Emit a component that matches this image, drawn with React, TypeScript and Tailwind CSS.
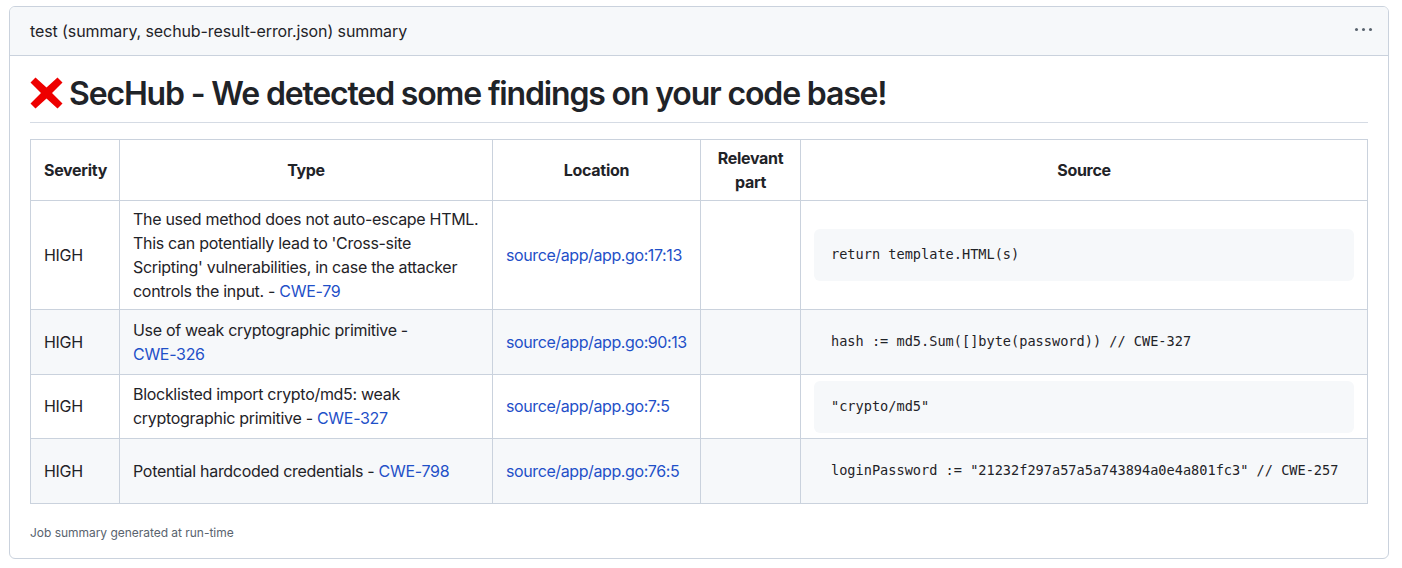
import React from 'react';

interface Row {
  text: string;
  cwe: string;
  location: string;
  source: string;
  boxed: boolean;
  height: string;
  cellPad: string;
}

const rows: Row[] = [
  {
    text: "The used method does not auto-escape HTML. This can potentially lead to 'Cross-site Scripting' vulnerabilities, in case the attacker controls the input. - ",
    cwe: 'CWE-79',
    location: 'source/app/app.go:17:13',
    source: 'return template.HTML(s)',
    boxed: true,
    height: 'h-[109px]',
    cellPad: '',
  },
  {
    text: 'Use of weak cryptographic primitive - ',
    cwe: 'CWE-326',
    location: 'source/app/app.go:90:13',
    source: 'hash := md5.Sum([]byte(password)) // CWE-327',
    boxed: false,
    height: 'h-[65px]',
    cellPad: '',
  },
  {
    text: 'Blocklisted import crypto/md5: weak cryptographic primitive - ',
    cwe: 'CWE-327',
    location: 'source/app/app.go:7:5',
    source: '"crypto/md5"',
    boxed: true,
    height: 'h-[64px]',
    cellPad: 'pb-[1px]',
  },
  {
    text: 'Potential hardcoded credentials - ',
    cwe: 'CWE-798',
    location: 'source/app/app.go:76:5',
    source: 'loginPassword := "21232f297a57a5a743894a0e4a801fc3" // CWE-257',
    boxed: false,
    height: 'h-[65px]',
    cellPad: '',
  },
];

const cell = 'border border-[#cad2dd] px-[13px] align-middle';
const mono = "font-['DejaVu_Sans_Mono',monospace] text-[13.6px] leading-[20px] tracking-normal whitespace-pre text-[#1f2328] -translate-y-[1px]";

const CrossMark = () => (
  <svg width="33" height="32" viewBox="0 0 33 32" className="shrink-0">
    <path d="M0.5 5.5 L5.5 0.5 L16.5 10.5 L27.5 0.5 L32.5 5.5 L22 16 L32.5 26.5 L27.5 31.5 L16.5 21.5 L5.5 31.5 L0.5 26.5 L11 16 Z" fill="#ee0000" />
  </svg>
);

const App: React.FC = () => {
  return (
    <div className="w-[1402px] h-[568px] bg-white pt-[6px] pl-[9px] font-['Inter',sans-serif] text-[#1f2328]">
      <div className="w-[1380px] h-[553px] border border-[#cad2dd] rounded-[6px] overflow-hidden flex flex-col">
        <div className="h-[49px] shrink-0 bg-[#f6f8fa] border-b border-[#cad2dd] flex items-center justify-between pl-[20px] pr-[16px]">
          <span className="text-[16px] tracking-[-0.1px]">test (summary, sechub-result-error.json) summary</span>
          <div className="flex gap-[4px] pb-[3px]">
            <span className="w-[3px] h-[3px] rounded-full bg-[#59636e]" />
            <span className="w-[3px] h-[3px] rounded-full bg-[#59636e]" />
            <span className="w-[3px] h-[3px] rounded-full bg-[#59636e]" />
          </div>
        </div>
        <div className="px-[20px] flex-1 flex flex-col">
          <div className="h-[67px] border-b border-[#d5dbe4] flex items-center gap-[6px] pt-[8px] w-[1338px]">
            <CrossMark />
            <h1 className="text-[32px] leading-[40px] font-semibold tracking-[-1.16px] pt-[2px]">SecHub - We detected some findings on your code base!</h1>
          </div>
          <table className="mt-[16px] w-[1337px] table-fixed border-collapse text-[16px] leading-[24px] tracking-[-0.3px]">
            <colgroup>
              <col className="w-[89px]" />
              <col className="w-[373px]" />
              <col className="w-[208px]" />
              <col className="w-[100px]" />
              <col className="w-[567px]" />
            </colgroup>
            <thead>
              <tr className="h-[61px] font-semibold text-center">
                <th className={cell}>Severity</th>
                <th className={cell}>Type</th>
                <th className={cell}>Location</th>
                <th className={cell}>Relevant part</th>
                <th className={cell}>Source</th>
              </tr>
            </thead>
            <tbody>
              {rows.map((row, idx) => (
                <tr key={idx} className={`${row.height} ${idx % 2 === 1 ? 'bg-[#f6f8fa]' : 'bg-white'}`}>
                  <td className={`${cell} ${row.cellPad}`}>HIGH</td>
                  <td className={`${cell} ${row.cellPad}`}>
                    {row.text}
                    <a className="text-[#1f50c8] whitespace-nowrap">{row.cwe}</a>
                  </td>
                  <td className={`${cell} ${row.cellPad}`}>
                    <a className="text-[#1f50c8] tracking-[-0.4px]">{row.location}</a>
                  </td>
                  <td className={cell}></td>
                  <td className={cell}>
                    {row.boxed ? (
                      <div className="bg-[#f6f8fa] rounded-[6px] px-[17px] py-[16px]">
                        <pre className={mono}>{row.source}</pre>
                      </div>
                    ) : (
                      <pre className={`${mono} px-[17px]`}>{row.source}</pre>
                    )}
                  </td>
                </tr>
              ))}
            </tbody>
          </table>
          <div className="mt-[21px] text-[12px] leading-[16px] tracking-[-0.03px] text-[#59636e]">Job summary generated at run-time</div>
        </div>
      </div>
    </div>
  );
};

export default App;
